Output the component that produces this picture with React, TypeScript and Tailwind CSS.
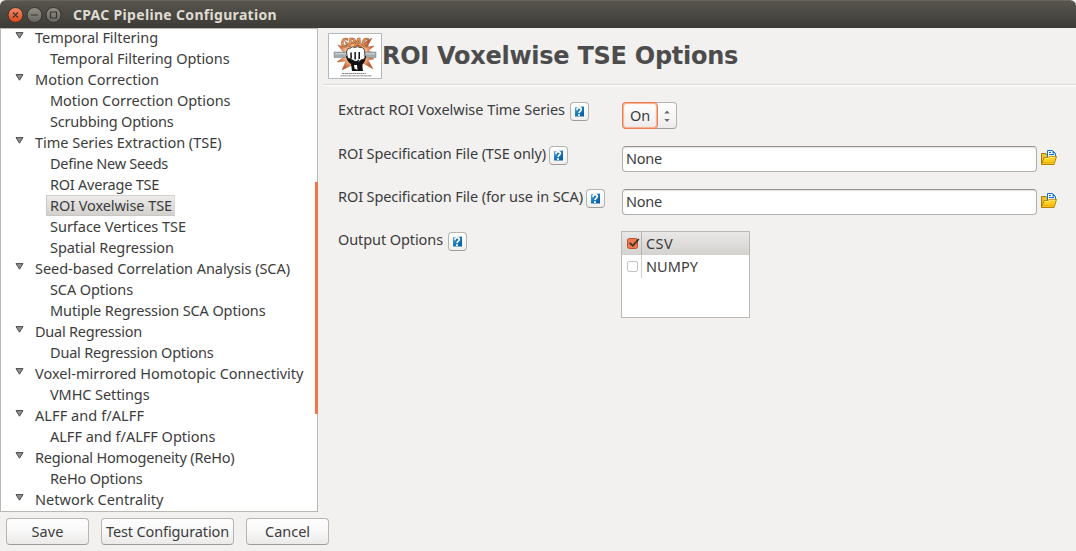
import { useLayoutEffect, useRef, useState } from "react";

// Text run whose tracking is adjusted so that it occupies a given width.
function Label({ text, w, className = "pb-[2px]" }: { text: string; w: number; className?: string }) {
  const ref = useRef<HTMLSpanElement>(null);
  const [spacing, setSpacing] = useState(0);
  useLayoutEffect(() => {
    if (!ref.current) return;
    const natural = ref.current.getBoundingClientRect().width - spacing * text.length;
    setSpacing((w - natural) / text.length);
  }, [text, w]);
  return (
    <span ref={ref} className={`inline-block whitespace-pre ${className}`} style={{ letterSpacing: `${spacing}px` }}>
      {text}
    </span>
  );
}

type Node = { text: string; w: number; child?: boolean; selected?: boolean };

const tree: Node[] = [
  { text: "Temporal Filtering", w: 123 },
  { text: "Temporal Filtering Options", w: 179.5, child: true },
  { text: "Motion Correction", w: 124 },
  { text: "Motion Correction Options", w: 180.5, child: true },
  { text: "Scrubbing Options", w: 123.5, child: true },
  { text: "Time Series Extraction (TSE)", w: 186.5 },
  { text: "Define New Seeds", w: 118, child: true },
  { text: "ROI Average TSE", w: 109, child: true },
  { text: "ROI Voxelwise TSE", w: 122, child: true, selected: true },
  { text: "Surface Vertices TSE", w: 136, child: true },
  { text: "Spatial Regression", w: 124, child: true },
  { text: "Seed-based Correlation Analysis (SCA)", w: 255 },
  { text: "SCA Options", w: 83, child: true },
  { text: "Mutiple Regression SCA Options", w: 215.5, child: true },
  { text: "Dual Regression", w: 107 },
  { text: "Dual Regression Options", w: 163.5, child: true },
  { text: "Voxel-mirrored Homotopic Connectivity", w: 268.5 },
  { text: "VMHC Settings", w: 99.5, child: true },
  { text: "ALFF and f/ALFF", w: 109 },
  { text: "ALFF and f/ALFF Options", w: 165.5, child: true },
  { text: "Regional Homogeneity (ReHo)", w: 199.5 },
  { text: "ReHo Options", w: 92.5, child: true },
  { text: "Network Centrality", w: 128.5 },
];

function TreeRow({ node }: { node: Node }) {
  return (
    <div className="flex h-[21px] shrink-0">
      {node.child ? (
        <div
          className={`ml-[45px] flex h-[21px] items-center border pl-[3px] ${
            node.selected
              ? "w-[129px] border-[#c9c6c3] border-t-[#d3d1ce] border-r-[#dad8d6] bg-linear-to-b from-[#eeeceb] to-[#d3d1ce]"
              : "border-transparent"
          }`}
        >
          <Label text={node.text} w={node.w} />
        </div>
      ) : (
        <>
          <svg className="mt-[5px] ml-[14px] h-[7px] w-[9px]" viewBox="0 0 9 7">
            <path d="M1 .6h7L4.5 6.2z" fill="#929292" stroke="#4c4c4c" strokeWidth="1" />
          </svg>
          <div className="ml-[11px] flex h-[21px] items-center">
            <Label text={node.text} w={node.w} />
          </div>
        </>
      )}
    </div>
  );
}

function HelpButton() {
  return (
    <button className="flex h-[19px] w-[19px] shrink-0 items-center justify-center rounded-[4px] border border-[#b5b2af] border-b-[#9f9c99] bg-linear-to-b from-white to-[#f1f0ef]">
      <svg className="h-[11px] w-[11px]" viewBox="0 0 11 11">
        <defs>
          <linearGradient id="help" x1="0" x2="1" y1="0" y2="1">
            <stop offset="0" stopColor="#5eabd9" />
            <stop offset=".5" stopColor="#1576b9" />
            <stop offset="1" stopColor="#0559a0" />
          </linearGradient>
        </defs>
        <path d="M1 1.2 10 .6V10.4H1z" fill="url(#help)" />
        <path d="M3.2 4.2V2.4C4.2 1.4 7.6 1.5 7.3 3.6 7 5.2 5.3 5.2 5 7.2" fill="none" stroke="#fff" strokeWidth="1.7" />
        <path d="M4 8.3h1.9v1.6H4z" fill="#fff" />
        <path d="M3.9 3.2h1.9L5 4.7H3.9z" fill="#1576b9" />
      </svg>
    </button>
  );
}

function FolderIcon() {
  return (
    <svg className="h-4 w-4 shrink-0" viewBox="0 0 16 16">
      <path d="M.5 14.5v-11H5L6.2 5H14v4" fill="#eec52b" stroke="#a9780c" />
      <path d="M6.5 8V.5h5l3 3V8z" fill="#fff" stroke="#1170d2" />
      <path d="M11.5.5v3h3z" fill="#1170d2" />
      <path d="M8 2.5h2M8 4.5h5" fill="none" stroke="#1170d2" />
      <path d="M.6 14.5 3 7.5h4l1.2-1.2h7.3l-2.4 8.2z" fill="#ffcf22" stroke="#b38209" />
      <path d="M3.8 8.4h3.7l1.2-1.1h5.5" fill="none" stroke="#ffe97d" />
      <path d="m2 13.6.8-2.2h10.7l-.8 2.2z" fill="#efb70e" />
    </svg>
  );
}

function Logo() {
  return (
    <svg className="h-[46px] w-[54px] shrink-0" viewBox="0 0 54 46">
      <defs>
        <radialGradient id="burst">
          <stop offset="0" stopColor="#fff0c8" />
          <stop offset=".6" stopColor="#f7b987" />
          <stop offset="1" stopColor="#c4582c" />
        </radialGradient>
      </defs>
      <path d="M.5.5h53v45H.5z" fill="#fff" stroke="#b4b8bd" />
      <path
        d="m27 7 5 5 12-7-5 9 7-1-6 5 6 2-6 3 6 3-6 1 5 9-10-6-1 5-4-3-3 5-3-5-10 5 4-9-9 1 7-5-6-2 6-2-6-8 9 3-2-7 6 4z"
        fill="url(#burst)"
        stroke="#a7512f"
        strokeWidth=".4"
      />
      <path d="M6 19h42v5.500H6z" fill="#a3a9ac" stroke="#777d80" strokeWidth=".5" />
      <path d="M7 20.800h40" stroke="#dadddf" />
      <path d="M18 23q1 6 5 8l1 7h11l-1-6q4-4 4-9z" fill="#111" />
      <path d="m26 32 .5 3.500 3 1.500-.5-5z" fill="#fff" />
      <path
        d="M18.500 19q0-4 4-4 2-2 4.500-.6 2.500-1.500 5 .2 4-.6 4.500 3l.5 7q-1 2.500-4 2.200L31 29l-5-1-3-2-3.500-1z"
        fill="#fff"
        stroke="#222"
        strokeWidth=".8"
      />
      <path
        d="m23 19.500.2 6m3.900-6.500.1 7.500m4.100-7.500-.1 7M24 28.500l4 1 3-2.500"
        fill="none"
        stroke="#111"
        strokeWidth="1.500"
      />
      <text
        x="13"
        y="13.500"
        textLength="28"
        lengthAdjust="spacingAndGlyphs"
        className="fill-[#f3a05a] stroke-[#7a4125] font-['DejaVu_Sans'] text-[13px] font-bold italic"
        strokeWidth=".6"
      >
        CPAC
      </text>
      <path d="M14 40.500h24M12.500 42.800h31" stroke="#777" strokeWidth=".9" strokeDasharray="2.200 .4 1.200 .3" />
    </svg>
  );
}

function FieldLabel({ text, w, gap = "ml-[3px]" }: { text: string; w: number; gap?: string }) {
  return (
    <div className="flex w-[284px] shrink-0 items-start">
      <Label text={text} w={w} className="-mt-[2px] leading-[18px]" />
      <span className={`flex ${gap}`}>
        <HelpButton />
      </span>
    </div>
  );
}

function FileField({ label, w }: { label: string; w: number }) {
  return (
    <div className="mt-[17px] flex h-[26px]">
      <FieldLabel text={label} w={w} />
      <div className="flex h-[26px] w-[415px] items-center rounded-[4px] border border-[#b1aeab] border-t-[#96938f] bg-white pl-[3px] shadow-[inset_0_1px_1px_#e2e1df]">
        <Label text="None" w={36} />
      </div>
      <button className="mt-[4px] ml-[4px] h-4">
        <FolderIcon />
      </button>
    </div>
  );
}

function ActionButton({ text, w, className }: { text: string; w: number; className: string }) {
  return (
    <button
      className={`flex h-[27px] items-center justify-center rounded-[4px] border border-[#b8b5b2] border-b-[#9e9b98] bg-linear-to-b from-white via-[#f8f7f7] to-[#ebeae9] ${className}`}
    >
      <Label text={text} w={w} />
    </button>
  );
}

export default function App() {
  return (
    <div className="flex h-[551px] w-[1076px] flex-col overflow-hidden bg-[#f2f1f0] font-['Noto_Sans',sans-serif] text-[14.5px] leading-[20px] text-[#3c3c3c]">
      <header className="flex h-[28px] shrink-0 items-center rounded-t-[6px] border-t border-[#66645d] bg-linear-to-b from-[#57554e] to-[#3d3b36] pl-[7px] text-[#dfdbd2]">
        <svg className="h-[18px] w-[56px]" viewBox="0 0 56 18">
          <defs>
            <linearGradient id="close" x1="0" x2="0" y1="0" y2="1">
              <stop offset="0" stopColor="#f58b67" />
              <stop offset="1" stopColor="#dd4817" />
            </linearGradient>
            <linearGradient id="control" x1="0" x2="0" y1="0" y2="1">
              <stop offset="0" stopColor="#929087" />
              <stop offset="1" stopColor="#67655e" />
            </linearGradient>
          </defs>
          <g stroke="#33322d">
            <circle cx="8.5" cy="9" r="7.5" fill="url(#close)" />
            <circle cx="27.5" cy="9" r="7.5" fill="url(#control)" />
            <circle cx="46.5" cy="9" r="7.5" fill="url(#control)" />
          </g>
          <g fill="none" stroke="#383630" strokeWidth="1.2">
            <path d="m6 6.5 5 5m0-5-5 5M24 9h7M43.5 6h6v6h-6z" />
          </g>
        </svg>
        <Label text="CPAC Pipeline Configuration" w={204} className="ml-[10px] text-[14px] font-bold" />
      </header>

      <div className="flex h-[484px] shrink-0">
        <aside className="flex w-[318px] shrink-0 border border-[#bbb7b3] bg-white">
          <div className="-mt-[2px] flex w-[314px] shrink-0 flex-col">
            {tree.map((node) => (
              <TreeRow key={node.text} node={node} />
            ))}
          </div>
          <div className="mt-[153px] h-[232px] w-[3px] shrink-0 bg-[#f07746]" />
        </aside>

        <main className="ml-[5px] flex flex-1 flex-col">
          <div className="flex h-[57px] items-start border-b border-[#dcdad8] pt-[5px] pl-[5px]">
            <Logo />
            <Label
              text="ROI Voxelwise TSE Options"
              w={356}
              className="mt-[8px] font-['DejaVu_Sans'] text-[24px] leading-[30px] font-bold text-[#4c4c4c]"
            />
          </div>

          <div className="flex flex-col border-t border-white pt-[16px] pl-[15px]">
            <div className="flex h-[27px]">
              <FieldLabel text="Extract ROI Voxelwise Time Series" w={227} gap="ml-[5px]" />
              <div className="flex h-[27px] w-[55px] rounded-[4px] border border-[#b5b2af] border-b-[#9f9c99] bg-linear-to-b from-white to-[#edeceb]">
                <div className="-mt-px -ml-px flex h-[27px] w-[36px] items-center justify-center rounded-[4px] border border-[#ef7c50] shadow-[inset_0_0_1px_1px_#f6ac8f]">
                  <Label text="On" w={20} className="pb-[2px]" />
                </div>
                <svg className="mt-[6px] ml-[5px] h-[14px] w-[8px]" viewBox="0 0 8 14">
                  <path d="m1.300 4.500 2.700-2.900 2.700 2.900zM1.300 10h5.400L4 12.900z" fill="#6b6967" />
                </svg>
              </div>
            </div>
            <FileField label="ROI Specification File (TSE only)" w={208} />
            <FileField label="ROI Specification File (for use in SCA)" w={245} />
            <div className="mt-[16px] flex">
              <div className="mt-px flex w-[283px]">
                <FieldLabel text="Output Options" w={105} gap="ml-[5px]" />
              </div>
              <div className="flex h-[87px] w-[129px] flex-col border border-[#bbb8b5] bg-white">
                <div className="flex h-[23px] items-center bg-linear-to-b from-[#eae8e7] to-[#d4d2cf]">
                  <span className="flex h-full w-[20px] items-center border-r border-[#b7b4b1] pl-[5px]">
                    <svg className="h-[13px] w-[14px] shrink-0" viewBox="0 0 14 13">
                      <rect x=".5" y="1.5" width="10" height="10" rx="2" fill="#ee7950" stroke="#b94e2b" />
                      <path d="m2.8 5.8 3 3L11.8 2" fill="none" stroke="#3b302b" strokeWidth="1.8" />
                    </svg>
                  </span>
                  <Label text="CSV" w={27} className="ml-[4px] pb-[2px]" />
                </div>
                <div className="flex h-[23px] items-center">
                  <span className="flex h-full w-[20px] items-center border-r border-[#d0cecc] pl-[5px]">
                    <span className="h-[11px] w-[11px] rounded-[2px] border border-[#c5c2bf]" />
                  </span>
                  <Label text="NUMPY" w={52} className="ml-[4px] pb-[2px]" />
                </div>
              </div>
            </div>
          </div>
        </main>
      </div>

      <footer className="flex gap-[12px] pt-[6px] pl-[6px]">
        <ActionButton text="Save" w={32} className="w-[83px]" />
        <ActionButton text="Test Configuration" w={123} className="w-[133px]" />
        <ActionButton text="Cancel" w={45} className="w-[83px]" />
      </footer>
    </div>
  );
}
